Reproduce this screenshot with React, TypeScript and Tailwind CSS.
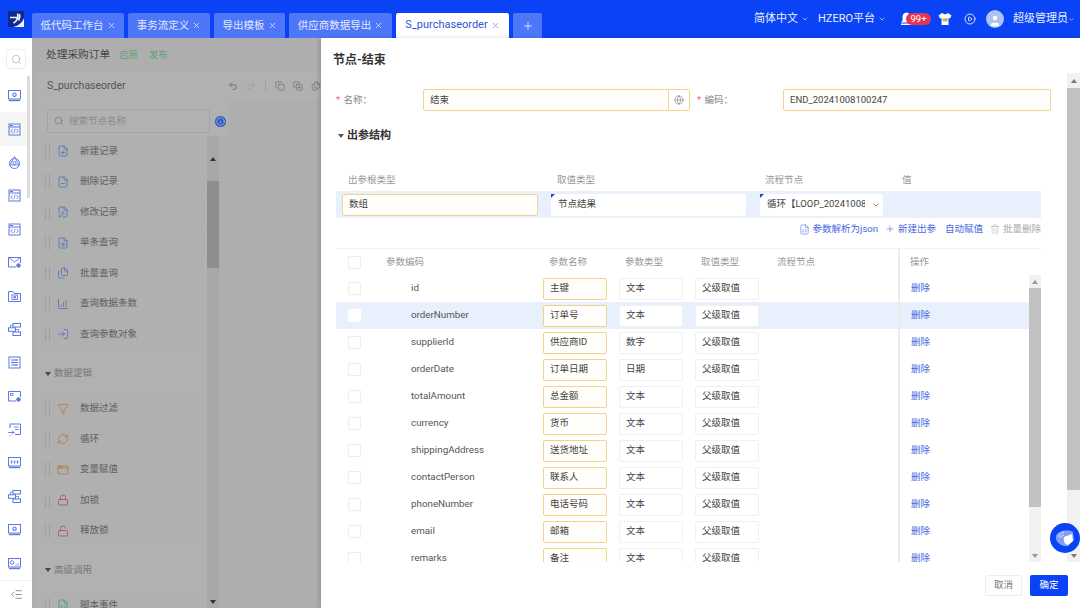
import {
  Search, X, Plus, ChevronDown, CirclePlay, User, Globe, Undo2, Redo2, Copy, CopyPlus, Files,
  Trash2, FileJson, FilePlus, FileMinus, FilePen, FileSearch, ChartColumnIncreasing, LogIn, Funnel, RefreshCw,
  Lock, LockOpen, FileCode, AppWindow, IndentDecrease, Info,
} from 'lucide-react';

const FONT = "font-['Roboto','Noto_Sans_CJK_SC',sans-serif]";

const tabs = [
  { label: '低代码工作台', w: 'w-[92px]' },
  { label: '事务流定义', w: 'w-[82px]' },
  { label: '导出模板', w: 'w-[71px]' },
  { label: '供应商数据导出', w: 'w-[103px]' },
];

const rows = [
  { code: 'id', name: '主键', type: '文本' },
  { code: 'orderNumber', name: '订单号', type: '文本', active: true },
  { code: 'supplierId', name: '供应商ID', type: '数字' },
  { code: 'orderDate', name: '订单日期', type: '日期' },
  { code: 'totalAmount', name: '总金额', type: '文本' },
  { code: 'currency', name: '货币', type: '文本' },
  { code: 'shippingAddress', name: '送货地址', type: '文本' },
  { code: 'contactPerson', name: '联系人', type: '文本' },
  { code: 'phoneNumber', name: '电话号码', type: '文本' },
  { code: 'email', name: '邮箱', type: '文本' },
  { code: 'remarks', name: '备注', type: '文本' },
];

// rail icons, all on the same 14px grid
function Glyph({ children }: { children: React.ReactNode }) {
  return (
    <svg width="15" height="15" viewBox="0 0 15 15" fill="none" stroke="currentColor" strokeWidth="1">
      {children}
    </svg>
  );
}

const CodeWindow = (
  <Glyph>
    <rect x="2" y="2" width="11" height="11" />
    <path d="M2 5h11" />
    <path d="M3 3.5h3" />
    <path d="M5.5 7L3.8 9l1.7 2M9.5 7l1.7 2-1.7 2M8.2 6.8L6.8 11.2" strokeWidth="0.8" />
  </Glyph>
);
const PanelCog = (
  <Glyph>
    <rect x="1.5" y="2.5" width="12" height="8.5" />
    <path d="M2 12.5h11" strokeWidth="1.4" />
    <circle cx="7.5" cy="6.7" r="1.7" strokeWidth="1.1" />
  </Glyph>
);
const Flow = (
  <Glyph>
    <rect x="6" y="1.5" width="7.5" height="3.5" />
    <rect x="1.5" y="5.8" width="7" height="3.5" />
    <rect x="6" y="10" width="7.5" height="3.5" />
    <path d="M6 3.2H3.5v2.6M8.5 7.5h3v2.5" strokeWidth="0.8" />
  </Glyph>
);

const railIcons = [
  PanelCog,
  CodeWindow,
  <Glyph>
    <circle cx="7.5" cy="8.5" r="5" />
    <path d="M7.5 1.5l4.5 8.5H3z" strokeWidth="0.9" />
    <circle cx="7.5" cy="8" r="1.6" strokeWidth="0.9" />
  </Glyph>,
  CodeWindow,
  CodeWindow,
  <Glyph>
    <path d="M9 12H1.5V2.5h12V8" />
    <path d="M1.5 2.5l6 4.5 6-4.5" strokeWidth="0.9" />
    <circle cx="11.5" cy="10.5" r="1.8" fill="currentColor" />
  </Glyph>,
  <Glyph>
    <path d="M1.5 12.5V2.5h4.5l1.5 2h6v8z" />
    <rect x="5" y="6" width="5.5" height="4.5" strokeWidth="0.9" />
    <circle cx="7.7" cy="8.2" r="0.9" fill="currentColor" />
  </Glyph>,
  Flow,
  <Glyph>
    <rect x="2" y="2" width="11" height="11" />
    <path d="M4 5h7M4 7.5h7M4 10h7" />
    <path d="M9 4v2M6 6.5v2M9 9v2" strokeWidth="0.9" />
  </Glyph>,
  <Glyph>
    <path d="M9 12H1.5V2.5h12V8" />
    <rect x="3.5" y="4.5" width="2.5" height="2" strokeWidth="0.8" />
    <circle cx="11.5" cy="10.5" r="1.8" fill="currentColor" />
  </Glyph>,
  <Glyph>
    <path d="M3 6V2h10.5v10.5H8" />
    <path d="M7 5h4.5M8 7.5h3.5" strokeWidth="0.9" />
    <path d="M1 10.5h6M5 8.5l2 2-2 2M3 13v1" strokeWidth="0.9" />
  </Glyph>,
  <Glyph>
    <rect x="1.5" y="2.5" width="12" height="8.5" />
    <path d="M2 12.5h11" strokeWidth="1.4" />
    <path d="M4.5 5.5v3M7.5 5.5v3M10.5 5.5v3" strokeWidth="1.4" />
  </Glyph>,
  Flow,
  PanelCog,
  <Glyph>
    <rect x="1.5" y="2.5" width="12" height="8.5" />
    <path d="M2 12.5h11" strokeWidth="1.4" />
    <circle cx="5" cy="6.5" r="1.8" strokeWidth="0.9" />
    <path d="M9 9.5v-1M11 9.5v-2" strokeWidth="1" />
  </Glyph>,
];

const groupOne = [
  { label: '新建记录', icon: FilePlus },
  { label: '删除记录', icon: FileMinus },
  { label: '修改记录', icon: FilePen },
  { label: '单条查询', icon: FileSearch },
  { label: '批量查询', icon: Files },
  { label: '查询数据条数', icon: ChartColumnIncreasing },
  { label: '查询参数对象', icon: LogIn },
];
const groupTwo = [
  { label: '数据过滤', icon: Funnel, color: 'text-[#b5763c]' },
  { label: '循环', icon: RefreshCw, color: 'text-[#b5763c]' },
  { label: '变量赋值', icon: AppWindow, color: 'text-[#b5763c]' },
  { label: '加锁', icon: Lock, color: 'text-[#b0405c]' },
  { label: '释放锁', icon: LockOpen, color: 'text-[#b0405c]' },
];

function NodeRow({ label, icon: Icon, color = 'text-[#4a6fb5]' }: { label: string; icon: typeof Lock; color?: string }) {
  return (
    <div className="h-[26px] mb-[4.5px] w-[164px] bg-[#b0b0b0] flex items-center pl-[4px] shrink-0">
      <div className="w-[5px] h-[13px] border-x border-dotted border-[#8f8f8f]" />
      <Icon size={12} strokeWidth={1.5} className={`ml-[7px] ${color}`} />
      <span className="ml-[11px] text-[9.5px] text-[#5f5f5f]">{label}</span>
    </div>
  );
}

function SectionLabel({ label }: { label: string }) {
  return (
    <div className="h-[44px] flex items-center pl-[4px] gap-[3px] shrink-0">
      <span className="w-0 h-0 border-x-[3px] border-x-transparent border-t-[4px] border-t-[#444]" />
      <span className="text-[9.5px] text-[#777]">{label}</span>
    </div>
  );
}

function ScrollBar({ track, thumb, thumbTop, thumbH, up, down, w }: { track: string; thumb: string; thumbTop: string; thumbH: string; up: string; down: string; w: string }) {
  return (
    <div className={`${w} ${track} shrink-0 flex flex-col items-center`}>
      <div className={`${thumbTop} flex items-center justify-center shrink-0 w-full`}>
        <span className={`w-0 h-0 border-x-[3px] border-x-transparent border-b-[4px] ${up}`} />
      </div>
      <div className={`w-full ${thumbH} ${thumb} shrink-0`} />
      <div className="flex-1" />
      <div className="h-[12px] flex items-center justify-center shrink-0">
        <span className={`w-0 h-0 border-x-[3px] border-x-transparent border-t-[4px] ${down}`} />
      </div>
    </div>
  );
}

function Box({ children, yellow, className = '' }: { children?: React.ReactNode; yellow?: boolean; className?: string }) {
  return (
    <div
      className={`h-[22px] flex items-center pl-[6px] text-[9.5px] text-[#444] rounded-[2px] border ${
        yellow ? 'border-[#f2d388] bg-[#fffefa]' : 'border-[#f0f0f0] bg-white'
      } ${className}`}
    >
      {children}
    </div>
  );
}

export default function App() {
  return (
    <div className={`${FONT} w-[1080px] h-[608px] overflow-hidden flex flex-col bg-white relative`}>
      {/* Header */}
      <header className="h-[38px] bg-[#0a43f5] flex shrink-0 text-white">
        <div className="w-[32px] flex justify-center pt-[11px] shrink-0">
          <svg width="16" height="16" viewBox="0 0 16 16">
            <rect width="16" height="16" fill="#0d2a8c" />
            <path d="M16 7v9H5c5-1 9-4 11-9z" fill="#f2f5ff" />
            <path d="M2 6.5h7M9.5 2.5c1 3 0 7-4 9.5M11.5 3c.8 2.5.3 4.5-.8 6.5" fill="none" stroke="#f2f5ff" strokeWidth="1.6" />
          </svg>
        </div>
        <div className="flex items-end gap-[4px]">
          {tabs.map((t) => (
            <div key={t.label} className={`${t.w} h-[25px] bg-[#4d77f8] rounded-t-[2px] flex items-center justify-center gap-[3px] text-[10.5px] text-[#e4ebff]`}>
              {t.label}
              <X size={9} strokeWidth={2} />
            </div>
          ))}
          <div className="w-[113px] h-[25px] bg-white rounded-t-[2px] flex items-center justify-center gap-[3px] text-[11px] text-[#2f55d4]">
            S_purchaseorder
            <X size={9} strokeWidth={2} className="text-[#7d8fc7]" />
          </div>
          <div className="w-[29px] h-[25px] bg-[#4d77f8] rounded-t-[2px] flex items-center justify-center">
            <Plus size={12} strokeWidth={1.5} />
          </div>
        </div>
        <div className="ml-auto flex items-center text-[11px] text-[#e9efff] pr-[6px]">
          <span>简体中文</span>
          <ChevronDown size={8} strokeWidth={2} className="ml-[3px]" />
          <span className="ml-[9px]">HZERO平台</span>
          <ChevronDown size={8} strokeWidth={2} className="ml-[3px]" />
          <div className="relative ml-[14px] w-[14px] h-[14px]">
            <svg width="13" height="14" viewBox="0 0 13 14" fill="white">
              <path d="M6.5 0.5c2.8 0 4 2.2 4 4.5v3.5l1.5 2H1l1.5-2V5c0-2.300 1.200-4.500 4-4.500z" />
              <rect x="1" y="11.500" width="11" height="1.500" />
            </svg>
            <span className="absolute left-[6px] top-[1px] w-[25px] h-[12px] rounded-full bg-[#e8344f] text-[9.5px] leading-[12px] text-center text-white">99+</span>
          </div>
          <svg width="14" height="14" viewBox="0 0 14 14" className="ml-[24px]">
            <path d="M4 1L0.500 3.500 2 6.500l1.500-.5V13h7V6l1.500.5 1.500-3L10 1 7 2.500z" fill="white" />
            <path d="M4.500 6.500h5v3h-5z" fill="#e8a860" />
            <path d="M7 6.500h2.500v2H7z" fill="#7fc28a" />
          </svg>
          <CirclePlay size={12} strokeWidth={1.8} className="ml-[12px]" />
          <div className="ml-[10px] w-[18px] h-[18px] rounded-full bg-[#a9c5f5] flex items-end justify-center overflow-hidden">
            <User size={14} fill="white" strokeWidth={0} />
          </div>
          <span className="ml-[9px]">超级管理员</span>
          <ChevronDown size={7} strokeWidth={2} className="mr-[-1px]" />
        </div>
      </header>

      <div className="flex-1 flex min-h-0">
        {/* Rail */}
        <aside className="w-[32px] shrink-0 bg-white flex flex-col relative">
          <div className="mt-[11px] ml-[6px] w-[20px] h-[20px] border border-[#eee] rounded-[2px] flex items-center justify-center shrink-0">
            <Search size={11} strokeWidth={1.2} className="text-[#999]" />
          </div>
          <div className="flex flex-col mt-[10px] text-[#5f78e0]">
            {railIcons.map((icon, i) => (
              <div key={i} className={`h-[33.4px] w-[28px] pl-[1px] flex items-center justify-center ${i === 1 ? 'bg-[#f6f6f6]' : ''}`}>
                {icon}
              </div>
            ))}
          </div>
          <div className="mt-auto h-[30px] flex items-center justify-center border-t border-[#f2f2f2] text-[#555]">
            <IndentDecrease size={13} strokeWidth={1.2} />
          </div>
          <div className="absolute left-[27px] top-[38px] w-[3px] h-[122px] bg-[#dcdcdc]" />
        </aside>

        {/* Dimmed canvas */}
        <section className="w-[289px] shrink-0 bg-[#aeaeae] overflow-hidden flex flex-col">
          <div className="h-[34px] pl-[14px] pt-[1px] flex items-center shrink-0">
            <span className="text-[10.7px] text-[#444]">处理采购订单</span>
            <span className="ml-[9px] text-[9px] text-[#5f9f78]">启用</span>
            <span className="ml-[12px] text-[9px] text-[#5f9f78]">发布</span>
          </div>
          <div className="h-[28px] ml-[5px] bg-[#b1b1b1] flex items-center pl-[10px] text-[#666] shrink-0">
            <span className="text-[10.5px] text-[#555] w-[181px]">S_purchaseorder</span>
            <Undo2 size={10} strokeWidth={1.5} className="text-[#555]" />
            <Redo2 size={10} strokeWidth={1.5} className="ml-[8px] text-[#999]" />
            <div className="ml-[9px] w-px h-[10px] bg-[#a0a0a0]" />
            <Copy size={10} strokeWidth={1.5} className="ml-[9px]" />
            <CopyPlus size={10} strokeWidth={1.5} className="ml-[8px]" />
            <Files size={10} strokeWidth={1.5} className="ml-[8px]" />
          </div>
          <div className="ml-[5px] w-[192px] pt-[9px] pb-[3px] pl-[10px] bg-[#b1b1b1] flex items-center shrink-0">
            <div className="w-[163px] h-[24px] border border-[#a5a5a5] rounded-[2px] flex items-center pl-[6px] gap-[5px] shrink-0">
              <Search size={10} strokeWidth={1.3} className="text-[#666]" />
              <span className="text-[9.5px] text-[#8a8a8a]">搜索节点名称</span>
            </div>
            <div className="ml-[5px] w-[11px] h-[11px] rounded-full bg-[#2f58bd] flex items-center justify-center shrink-0">
              <Info size={9} strokeWidth={1.5} className="text-[#d5e0fa]" />
            </div>
          </div>
          <div className="flex-1 flex min-h-0">
            <div className="w-[170px] ml-[5px] bg-[#b1b1b1] flex flex-col overflow-hidden pl-[4px] pt-[2px]">
              {groupOne.map((n) => <NodeRow key={n.label} {...n} />)}
              <SectionLabel label="数据逻辑" />
              {groupTwo.map((n) => <NodeRow key={n.label} {...n} />)}
              <SectionLabel label="高级调用" />
              <NodeRow label="脚本事件" icon={FileCode} color="text-[#3f9a58]" />
            </div>
            <ScrollBar w="w-[12px]" track="bg-[#a8a8a8]" thumb="bg-[#8e8e8e]" thumbTop="h-[45px]" thumbH="h-[87px]" up="border-b-[#333]" down="border-t-[#333]" />
          </div>
        </section>

        {/* Drawer */}
        <section className="flex-1 min-w-0 flex flex-col bg-white shadow-[-2px_0_4px_rgba(0,0,0,0.15)] z-10">
          <div className="h-[35px] pl-[12px] pt-[14px] text-[12px] font-bold leading-[16px] text-[#333] shrink-0">节点-结束</div>

          <div className="flex-1 flex min-h-0">
            <div className="flex-1 min-w-0 pl-[15px] pt-[16px] overflow-hidden">
              {/* Form */}
              <div className="flex items-center h-[22px]">
                <div className="w-[87px] text-[9.5px] text-[#888]"><span className="text-[#e8607a] mr-[1px]">*</span> 名称：</div>
                <Box yellow className="w-[246px] rounded-r-none">结束</Box>
                <div className="w-[21px] h-[22px] flex items-center justify-center border border-l-0 border-[#f2d388] rounded-r-[2px]">
                  <Globe size={10} strokeWidth={1.2} className="text-[#666]" />
                </div>
                <div className="ml-[7px] w-[86px] text-[9.5px] text-[#888]"><span className="text-[#e8607a] mr-[1px]">*</span> 编码：</div>
                <Box yellow className="w-[268px] text-[9.2px]">END_20241008100247</Box>
              </div>

              <div className="mt-[15px] h-[20px] flex items-center gap-[3px] pl-[2px]">
                <span className="w-0 h-0 border-x-[3px] border-x-transparent border-t-[4px] border-t-[#555]" />
                <span className="text-[11px] font-bold text-[#333]">出参结构</span>
              </div>

              {/* Root params */}
              <div className="w-[705px] mt-[24px] h-[21px] grid grid-cols-[209px_208px_137px_1fr] pl-[12px] items-center text-[9.5px] text-[#999]">
                <span>出参根类型</span>
                <span>取值类型</span>
                <span>流程节点</span>
                <span>值</span>
              </div>
              <div className="w-[705px] h-[27px] bg-[#e8f0fd] flex items-center pl-[6px]">
                <Box yellow className="w-[196px]">数组</Box>
                <div className="relative ml-[13px]">
                  <Box className="w-[195px] border-white">节点结果</Box>
                  <span className="absolute left-0 top-0 w-0 h-0 border-r-[4px] border-r-transparent border-t-[4px] border-t-[#2a45c8]" />
                </div>
                <div className="relative ml-[14px]">
                  <Box className="w-[123px] border-white overflow-hidden whitespace-nowrap">
                    <span className="w-[98px] overflow-hidden">循环【LOOP_20241008100247】</span>
                    <ChevronDown size={8} className="ml-[7px] shrink-0 text-[#555]" />
                  </Box>
                  <span className="absolute left-0 top-0 w-0 h-0 border-r-[4px] border-r-transparent border-t-[4px] border-t-[#2a45c8]" />
                </div>
              </div>

              {/* Actions */}
              <div className="w-[705px] h-[22px] flex items-center justify-end text-[9.5px] text-[#4468e0]">
                <FileJson size={11} strokeWidth={1.2} />
                <span className="ml-[3px]">参数解析为json</span>
                <Plus size={10} strokeWidth={1.4} className="ml-[7px]" />
                <span className="ml-[3px]">新建出参</span>
                <span className="ml-[9px]">自动赋值</span>
                <Trash2 size={10} strokeWidth={1.2} className="ml-[7px] text-[#aaa]" />
                <span className="ml-[3px] text-[#aaa]">批量删除</span>
              </div>

              {/* Table */}
              <div className="mt-[8px] w-[705px] border-t border-[#f2f2f2]">
                <div className="h-[26px] flex items-center text-[9.5px] text-[#999]">
                  <div className="w-[50px] pl-[12px]"><div className="w-[13px] h-[13px] border border-[#eee] rounded-[1px]" /></div>
                  <div className="w-[157px]">参数编码</div>
                  <div className="w-[76px] pl-[6px]">参数名称</div>
                  <div className="w-[76px] pl-[6px]">参数类型</div>
                  <div className="w-[82px] pl-[6px]">取值类型</div>
                  <div className="w-[121px]">流程节点</div>
                  <div className="flex-1 h-full border-l-2 border-[#ececec] pl-[10px] flex items-center">操作</div>
                </div>
                <div className="flex h-[287px] overflow-hidden">
                  <div className="flex-1 min-w-0">
                    {rows.map((r) => (
                      <div key={r.code} className={`h-[27px] flex items-center text-[9.5px] ${r.active ? 'bg-[#e8f0fd]' : ''}`}>
                        <div className="w-[50px] pl-[12px]"><div className={`w-[13px] h-[13px] border rounded-[1px] ${r.active ? 'bg-white border-white' : 'border-[#eee]'}`} /></div>
                        <div className="w-[157px] pl-[25px] text-[#555] text-[9.8px]">{r.code}</div>
                        <div className="w-[76px]"><Box yellow className="w-[64px]">{r.name}</Box></div>
                        <div className="w-[76px]"><Box className="w-[64px]">{r.type}</Box></div>
                        <div className="w-[82px]"><Box className="w-[64px]">父级取值</Box></div>
                        <div className="w-[121px]" />
                        <div className="flex-1 h-full border-l-2 border-[#ececec] pl-[11px] flex items-center text-[#4468e0]">删除</div>
                      </div>
                    ))}
                  </div>
                  <ScrollBar w="w-[12px]" track="bg-[#f1f1f1]" thumb="bg-[#c1c1c1]" thumbTop="h-[13px]" thumbH="h-[219px]" up="border-b-[#999]" down="border-t-[#999]" />
                </div>
              </div>
            </div>
            <ScrollBar w="w-[13px]" track="bg-[#f1f1f1]" thumb="bg-[#c1c1c1]" thumbTop="h-[15px]" thumbH="h-[402px]" up="border-b-[#777]" down="border-t-[#777]" />
          </div>

          <div className="h-[46px] shrink-0 flex items-center justify-end gap-[8px] pr-[12px] text-[9.5px]">
            <button className="w-[37px] h-[21px] border border-[#eee] rounded-[2px] text-[#777]">取消</button>
            <button className="w-[38px] h-[21px] bg-[#0a43f5] rounded-[2px] text-white">确定</button>
          </div>
        </section>
      </div>

      {/* Floating assistant */}
      <div className="absolute left-[1050px] top-[523px] w-[30px] h-[30px] rounded-full bg-[#0a43f5] flex items-center justify-center z-20">
        <svg width="22" height="20" viewBox="0 0 22 20">
          <path d="M2 8c1-5 12-7 17-4l1 8-6 6C7 19 1 14 2 8z" fill="#7fa2f8" />
          <path d="M5 9c0-3 2-5 5-5M7 10c0-2 1-3 3-3" fill="none" stroke="#d6e2fd" strokeWidth="1" />
          <path d="M10 9l8-3 1 7-5 4c-3 0-5-4-4-8z" fill="white" />
        </svg>
      </div>
    </div>
  );
}
